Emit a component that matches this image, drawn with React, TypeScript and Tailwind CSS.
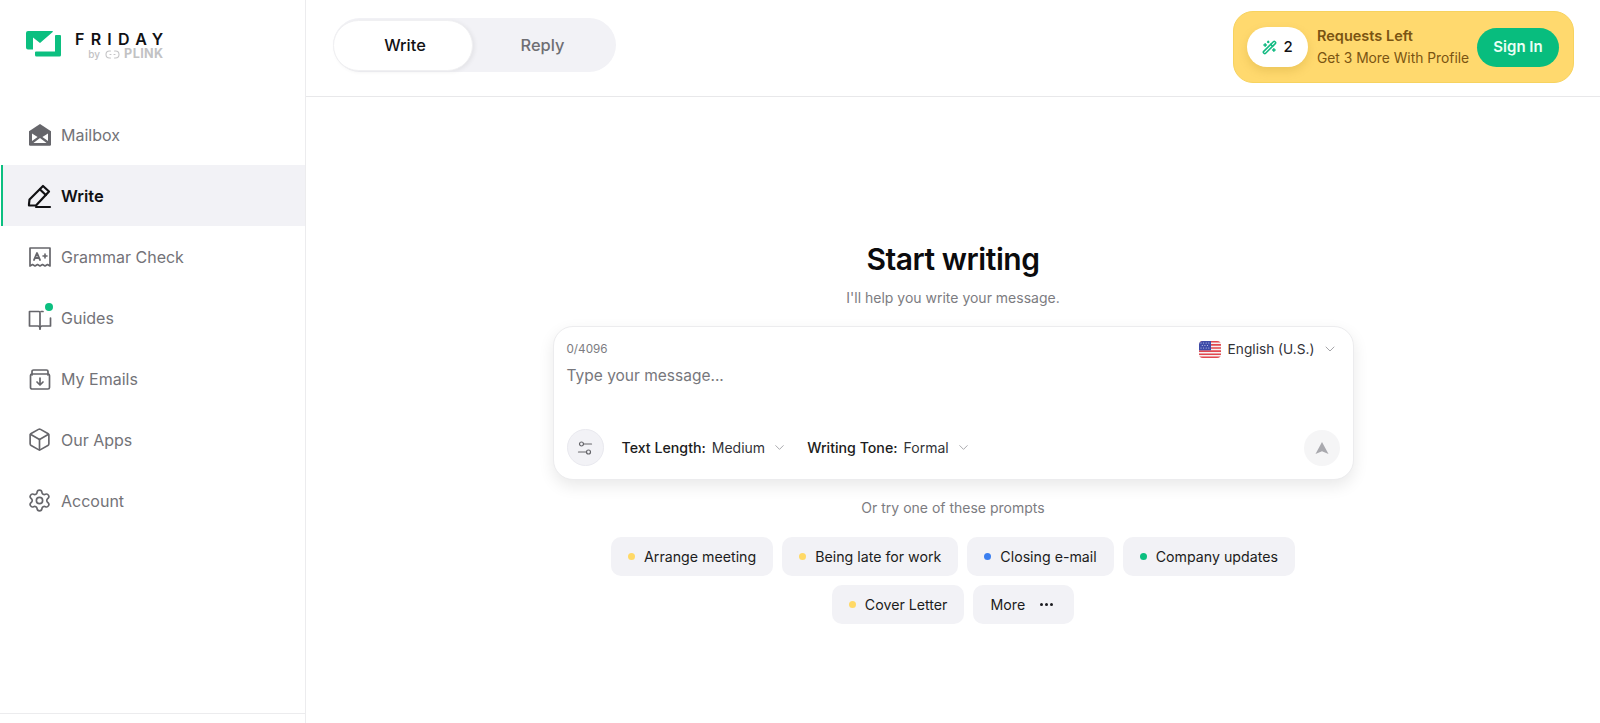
import React from "react";
import { Box, ChevronDown, Settings, WandSparkles } from "lucide-react";

const MailIcon = () => (
  <svg width="24" height="24" viewBox="0 0 24 24" className="text-[#66666b]">
    <path fill="currentColor" d="M12 1 L23 8.2 V21.5 a1.2 1.2 0 0 1 -1.2 1.2 H2.2 A1.2 1.2 0 0 1 1 21.5 V8.2 Z" />
    <path fill="#fff" d="M4 10.5 L9.6 14 L4 18 Z M20 10.5 L14.4 14 L20 18 Z M12 15 L18.6 20 H5.4 Z" />
  </svg>
);
const PenIcon = () => (
  <svg width="25" height="25" viewBox="0 0 25 25" fill="none" stroke="#111114" strokeWidth="2.2" strokeLinejoin="round" strokeLinecap="round">
    <path d="M2 20 L2.5 15.5 L16 2 L22 7.5 L9 21.5 H2 Z" />
    <path d="M13 5.5 L18.8 11" />
    <path d="M9 23 H23" />
  </svg>
);
const GrammarIcon = () => (
  <svg width="24" height="24" viewBox="0 0 24 24" fill="none" stroke="#66666b" strokeWidth="1.7" strokeLinejoin="round" strokeLinecap="round">
    <path d="M2 3 H22 V21 L19.5 19.6 L17 21 L14.5 19.6 L12 21 L9.5 19.6 L7 21 L4.5 19.6 L2 21 Z" />
    <path d="M6 15 L9 8 L12 15 M7 13 H11" strokeWidth="1.9" />
    <path d="M15 11 H19 M17 9 V13" strokeWidth="1.6" />
  </svg>
);
const BookIcon = () => (
  <svg width="24" height="24" viewBox="0 0 24 24" fill="none" stroke="#66666b" strokeWidth="1.7" strokeLinejoin="round" strokeLinecap="round">
    <path d="M11 5.5 H1.5 V20 H10 C11.2 20 12 20.8 12 23 V7 C12 6 11.7 5.5 11 5.5 Z" />
    <path d="M13 5.5 H15 M22.5 12 V20 H14 C12.8 20 12 20.8 12 23" />
  </svg>
);
const ArchiveIcon = () => (
  <svg width="24" height="24" viewBox="0 0 24 24" fill="none" stroke="#66666b" strokeWidth="1.7" strokeLinejoin="round" strokeLinecap="round">
    <path d="M4 8 V4.5 a1.5 1.5 0 0 1 1.5 -1.5 H18.5 a1.5 1.5 0 0 1 1.5 1.5 V8" />
    <rect x="2.5" y="7" width="19" height="15" rx="1.6" />
    <path d="M12 11 V17.5 M9 15 L12 18 L15 15" />
  </svg>
);
const TuneIcon = () => (
  <svg width="16" height="16" viewBox="0 0 16 16" fill="none" stroke="#66666b" strokeWidth="1.2" strokeLinecap="round">
    <circle cx="4.5" cy="4" r="2" />
    <path d="M6.5 4 H14.5" />
    <circle cx="11.5" cy="12" r="2" />
    <path d="M1.5 12 H9.5" />
  </svg>
);
const Flag = () => (
  <svg width="22" height="17" viewBox="0 0 22 17" className="shrink-0">
    <defs>
      <clipPath id="flag-clip">
        <rect width="22" height="17" rx="4" />
      </clipPath>
    </defs>
    <g clipPath="url(#flag-clip)">
      <rect width="22" height="17" fill="#f6f1f1" />
      <path fill="#e2474f" d="M0 0h22v1.6H0zM0 3.1h22v1.6H0zM0 6.2h22v1.6H0zM0 9.3h22v1.6H0zM0 12.4h22v1.6H0zM0 15.4h22V17H0z" />
      <rect width="12" height="9.3" fill="#3d4ba8" />
      <g fill="#cfd4f0">
        <circle cx="2" cy="2" r=".55" /><circle cx="4.6" cy="2" r=".55" /><circle cx="7.2" cy="2" r=".55" /><circle cx="9.8" cy="2" r=".55" />
        <circle cx="3.3" cy="4.5" r=".55" /><circle cx="5.9" cy="4.5" r=".55" /><circle cx="8.5" cy="4.5" r=".55" />
        <circle cx="2" cy="7" r=".55" /><circle cx="4.6" cy="7" r=".55" /><circle cx="7.2" cy="7" r=".55" /><circle cx="9.8" cy="7" r=".55" />
      </g>
    </g>
  </svg>
);
const Logo = () => (
  <svg width="35" height="26" viewBox="0 0 35 26" className="shrink-0">
    <path fill="#0cbf80" d="M0 2 a2 2 0 0 1 2 -2 H26 a1 1 0 0 1 1 .8 L14 12 L7 6.5 V18.5 H2 a2 2 0 0 1 -2 -2 Z" />
    <path fill="#0cbf80" d="M29 5 a1 1 0 0 1 1 -1 H34 a1 1 0 0 1 1 1 V24 a1.5 1.5 0 0 1 -1.5 1.5 H10.5 A1.5 1.5 0 0 1 9 24 V21.5 a1 1 0 0 1 1 -1 H29 Z" />
  </svg>
);
const LinkGlyph = () => (
  <svg width="15" height="9" viewBox="0 0 15 9" fill="none" stroke="#c4c4c6" strokeWidth="1.1" strokeLinecap="round" className="shrink-0">
    <path d="M5.5 1 H4.5 a3.5 3.5 0 0 0 0 7 H5.5 M9.5 1 H10.5 a3.5 3.5 0 0 1 0 7 H9.5 M5 4.5 H6 M9 4.5 H10" />
  </svg>
);

const navItems: { label: string; icon: React.ReactNode; active?: boolean; dot?: boolean }[] = [
  { label: "Mailbox", icon: <MailIcon /> },
  { label: "Write", icon: <PenIcon />, active: true },
  { label: "Grammar Check", icon: <GrammarIcon /> },
  { label: "Guides", icon: <BookIcon />, dot: true },
  { label: "My Emails", icon: <ArchiveIcon /> },
  { label: "Our Apps", icon: <Box size={25} strokeWidth={1.6} color="#66666b" /> },
  { label: "Account", icon: <Settings size={25} strokeWidth={1.6} color="#66666b" /> },
];

const Chip = ({ label, dot }: { label: string; dot: string }) => (
  <div className="flex h-[39px] items-center gap-[9px] rounded-[10px] bg-[#f2f2f6] pl-[17px] pr-[17px] text-[14.2px] text-[#1c1c20]">
    <span className={`h-[7px] w-[7px] rounded-full ${dot}`} />
    {label}
  </div>
);

export default function App() {
  return (
    <div className="flex h-[723px] w-[1600px] overflow-hidden bg-white font-['Inter',sans-serif] antialiased">
      <aside className="flex h-full w-[306px] shrink-0 flex-col border-r border-[#ececee]">
        <div className="flex h-[104px] shrink-0 items-start gap-[14px] pl-[26px] pt-[31px]">
          <Logo />
          <div className="flex flex-col items-end">
            <div className="mr-[-6px] text-[16px] font-semibold leading-[16px] tracking-[0.39em] text-[#111114]">FRIDAY</div>
            <div className="mt-[2px] flex items-center gap-[5px] text-[#c2c2c4]">
              <span className="text-[10px] font-medium leading-[10px]">by</span>
              <LinkGlyph />
              <span className="ml-[-1px] text-[12.6px] font-bold leading-[10px] tracking-[0.03em]">PLINK</span>
            </div>
          </div>
        </div>
        <nav className="flex flex-1 flex-col">
          {navItems.map((item) => (
            <div
              key={item.label}
              className={
                item.active
                  ? "ml-px flex h-[61px] items-center gap-[9px] border-l-2 border-[#0cbf80] bg-[#f2f2f6] pl-[24px] pt-[1px] text-[16.5px] font-semibold text-[#111114]"
                  : "ml-px flex h-[61px] items-center gap-[9px] border-l-2 border-transparent pl-[24px] text-[16px] text-[#737378]"
              }
            >
              <span className="relative flex h-[25px] w-[25px] items-center justify-center">
                {item.icon}
                {item.dot && <span className="absolute right-[-1px] top-[-2px] h-[8px] w-[8px] rounded-full bg-[#0cbf80]" />}
              </span>
              {item.label}
            </div>
          ))}
        </nav>
        <div className="h-[10px] shrink-0 border-t border-[#ececee]" />
      </aside>

      <div className="flex min-w-0 flex-1 flex-col">
        <header className="flex h-[97px] shrink-0 items-start justify-between border-b border-[#e8e8ea] pl-[27px] pr-[26px]">
          <div className="mt-[18px] flex h-[54px] w-[283px] items-center rounded-full bg-[#f2f2f6]">
            <div className="flex h-[51px] w-[140px] items-center justify-center rounded-full border border-[#f0f0f2] bg-white pl-[4px] text-[16.4px] font-medium text-[#111114] shadow-[2px_1px_4px_rgba(0,0,0,0.06)]">
              Write
            </div>
            <div className="flex flex-1 items-center justify-center pr-[4px] text-[16.4px] font-medium text-[#6e6e73]">Reply</div>
          </div>
          <div className="mt-[11px] flex h-[72px] w-[341px] items-center rounded-[20px] border border-[#f7d35f] bg-[#ffd96e] pl-[13px] pr-[14px]">
            <div className="flex h-[40px] w-[61px] items-center justify-center gap-[6px] rounded-full bg-white text-[15px] font-medium text-[#111114] shadow-[0_4px_10px_rgba(150,110,0,0.18)]">
              <WandSparkles size={15} color="#10b981" strokeWidth={2.4} />2
            </div>
            <div className="ml-[9px] flex flex-1 flex-col leading-[22px] text-[#7a5412]">
              <span className="text-[14.5px] font-semibold">Requests Left</span>
              <span className="text-[13.8px]">Get 3 More With Profile</span>
            </div>
            <div className="flex h-[39px] w-[82px] items-center justify-center rounded-full bg-[#08bd7e] text-[15px] font-semibold text-[#eafff5]">
              Sign In
            </div>
          </div>
        </header>

        <main className="flex flex-1 flex-col items-center pt-[141px]">
          <h1 className="text-[30px] font-semibold leading-[42px] tracking-[-0.015em] text-[#0b0b0d]">Start writing</h1>
          <p className="mt-[8px] text-[14px] leading-[20px] text-[#7c7c81]">I'll help you write your message.</p>
          <div className="mt-[18px] flex h-[154px] w-[801px] flex-col rounded-[20px] border border-[#ececee] bg-white pl-[13px] pr-[13px] shadow-[0_6px_16px_rgba(0,0,0,0.09)]">
            <div className="flex h-[43px] shrink-0 items-center justify-between pt-[2px]">
              <span className="text-[11.7px] text-[#7c7c81]">0/4096</span>
              <div className="flex items-center gap-[7px] pr-[2px] text-[13.7px] text-[#333338]">
                <Flag />
                English (U.S.)
                <ChevronDown size={16} strokeWidth={1.2} color="#8e8e93" />
              </div>
            </div>
            <div className="-mt-[4px] text-[15.5px] leading-[20px] text-[#77777c]">Type your message...</div>
            <div className="mt-[43px] flex items-center">
              <div className="flex h-[37px] w-[37px] items-center justify-center rounded-full border border-[#e9e9ef] bg-[#f2f2f6]">
                <TuneIcon />
              </div>
              <div className="ml-[18px] flex items-center text-[14px] text-[#1c1c20]">
                <span className="text-[14.2px] font-medium">Text Length:</span>
                <span className="ml-[6px] text-[#333338]">Medium</span>
                <ChevronDown size={15} strokeWidth={1.2} color="#8e8e93" className="ml-[7px]" />
              </div>
              <div className="ml-[20px] flex items-center text-[14px] text-[#1c1c20]">
                <span className="text-[14.2px] font-medium">Writing Tone:</span>
                <span className="ml-[6px] text-[#333338]">Formal</span>
                <ChevronDown size={15} strokeWidth={1.2} color="#8e8e93" className="ml-[7px]" />
              </div>
              <div className="ml-auto flex h-[36px] w-[36px] items-center justify-center rounded-full bg-[#f5f5f6]">
                <svg width="14" height="14" viewBox="0 0 14 14">
                  <path fill="#a9a9ae" d="M7 1 L13.5 13 L7 10.2 L.5 13 Z" />
                </svg>
              </div>
            </div>
          </div>
          <p className="mt-[18px] text-[14px] leading-[20px] text-[#7c7c81]">Or try one of these prompts</p>
          <div className="mt-[19px] flex gap-[9px]">
            <Chip label="Arrange meeting" dot="bg-[#ffd966]" />
            <Chip label="Being late for work" dot="bg-[#ffd966]" />
            <Chip label="Closing e-mail" dot="bg-[#3b7ff0]" />
            <Chip label="Company updates" dot="bg-[#0cbf80]" />
          </div>
          <div className="mt-[9px] flex gap-[9px]">
            <Chip label="Cover Letter" dot="bg-[#ffd966]" />
            <div className="flex h-[39px] items-center gap-[15px] rounded-[10px] bg-[#f2f2f6] pl-[17px] pr-[21px] text-[14.2px] text-[#1c1c20]">
              More
              <span className="flex gap-[2px]">
                <span className="h-[3px] w-[3px] rounded-full bg-[#1c1c20]" />
                <span className="h-[3px] w-[3px] rounded-full bg-[#1c1c20]" />
                <span className="h-[3px] w-[3px] rounded-full bg-[#1c1c20]" />
              </span>
            </div>
          </div>
        </main>
      </div>
    </div>
  );
}
